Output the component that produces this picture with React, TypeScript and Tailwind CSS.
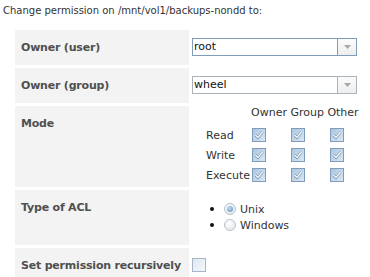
import React from 'react';

const Checkbox = ({ checked }: { checked: boolean }) => (
  <svg width="14" height="14" viewBox="0 0 14 14" className="block">
    <defs>
      <linearGradient id={checked ? 'cbOn' : 'cbOff'} x1="0" y1="0" x2="1" y2="1">
        <stop offset="0" stopColor={checked ? '#a9c5e0' : '#dde6ef'} />
        <stop offset="1" stopColor={checked ? '#dbe8f4' : '#f6f9fb'} />
      </linearGradient>
    </defs>
    <rect x="0.5" y="0.5" width="13" height="13" fill={`url(#${checked ? 'cbOn' : 'cbOff'})`} stroke={checked ? '#7f9cba' : '#a7b6c6'} />
    {checked && (
      <>
        <path d="M3.5 7 L6 9.5 L10.5 4" fill="none" stroke="#6c8aa8" strokeWidth="2.6" />
        <path d="M3.5 7 L6 9.5 L10.5 4" fill="none" stroke="#f4f8fc" strokeWidth="1.5" />
      </>
    )}
  </svg>
);

const Radio = ({ checked }: { checked: boolean }) => (
  <svg width="12" height="12" viewBox="0 0 12 12" className="block">
    <defs>
      <radialGradient id="rdBg" cx="0.4" cy="0.35" r="0.7">
        <stop offset="0" stopColor="#ffffff" />
        <stop offset="1" stopColor="#e1e6eb" />
      </radialGradient>
      <radialGradient id="rdDot" cx="0.4" cy="0.35" r="0.7">
        <stop offset="0" stopColor="#c4dbf1" />
        <stop offset="1" stopColor="#6f9cc8" />
      </radialGradient>
    </defs>
    <circle cx="6" cy="6" r="5.5" fill="url(#rdBg)" stroke="#b9c2cb" />
    {checked && <circle cx="6" cy="6" r="3" fill="url(#rdDot)" />}
  </svg>
);

const Select = ({ value, border }: { value: string; border: string }) => (
  <div className={`flex h-[18px] w-[165px] border bg-white ${border}`}>
    <div className="flex-1 pl-[1px] leading-[16px] text-[#111]">{value}</div>
    <div className={`flex w-[19px] items-center justify-center border-l bg-gradient-to-b from-[#fbfbfb] to-[#eeeeee] ${border}`}>
      <svg width="7" height="4" viewBox="0 0 7 4">
        <path d="M0 0 H7 L3.5 4 Z" fill="#a3a9b0" />
      </svg>
    </div>
  </div>
);

const Label = ({ children }: { children: React.ReactNode }) => (
  <div className="w-[174px] shrink-0 whitespace-nowrap bg-[#f3f3f3] px-[6px] py-[11px] font-bold leading-[13px] tracking-[-0.2px] text-[#505050]">
    {children}
  </div>
);

const Bullet = ({ checked, label }: { checked: boolean; label: string }) => (
  <div className="flex h-[16px] items-center">
    <span className="ml-[18px] h-[4px] w-[4px] rounded-full bg-[#111]" />
    <span className="ml-[10px]">
      <Radio checked={checked} />
    </span>
    <span className="ml-[4px] leading-[13px]">{label}</span>
  </div>
);

export default function App() {
  const perms = ['Read', 'Write', 'Execute'];

  return (
    <div className="h-[277px] w-[370px] overflow-hidden bg-white font-['DejaVu_Sans',sans-serif] text-[11px] text-[#333]">
      <p className="pl-[3px] pt-[4px] text-[10px] leading-[13px]">Change permission on /mnt/vol1/backups-nondd to:</p>

      <div className="ml-[15px] mt-[13px] flex flex-col gap-[3px]">
        <div className="flex gap-[3px]">
          <Label>Owner (user)</Label>
          <div className="pt-[8px]">
            <Select value="root" border="border-[#7f9db9]" />
          </div>
        </div>

        <div className="flex gap-[3px]">
          <Label>Owner (group)</Label>
          <div className="pt-[8px]">
            <Select value="wheel" border="border-[#aab2ba]" />
          </div>
        </div>

        <div className="flex gap-[3px]">
          <Label>Mode</Label>
          <div className="pb-[2px] pl-[14px]">
            <div className="mb-[6px] ml-[45px] leading-[13px]">Owner Group Other</div>
            {perms.map((p) => (
              <div key={p} className="grid h-[20px] grid-cols-[46px_39px_39px_39px] items-center">
                <span className="leading-[13px]">{p}</span>
                <Checkbox checked />
                <Checkbox checked />
                <Checkbox checked />
              </div>
            ))}
          </div>
        </div>

        <div className="flex gap-[3px]">
          <Label>Type of ACL</Label>
          <div className="pb-[12px] pt-[11px]">
            <Bullet checked label="Unix" />
            <Bullet checked={false} label="Windows" />
          </div>
        </div>

        <div className="flex gap-[3px]">
          <Label>Set permission recursively</Label>
          <div className="pt-[10px]">
            <Checkbox checked={false} />
          </div>
        </div>
      </div>
    </div>
  );
}
